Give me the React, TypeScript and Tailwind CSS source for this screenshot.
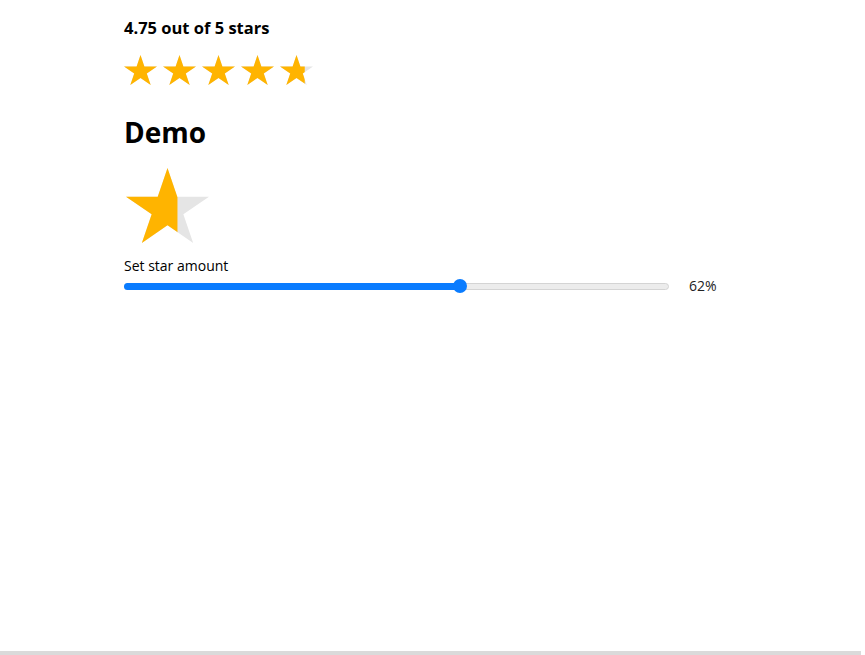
import React, { useState } from 'react';

// regular five-point star, stretched a little wider to match the design
const STAR_POINTS = (() => {
  const pts: string[] = [];
  for (let i = 0; i < 10; i++) {
    const r = i % 2 === 0 ? 1 : 0.382;
    const a = (Math.PI / 5) * i - Math.PI / 2;
    pts.push(`${(r * Math.cos(a)).toFixed(4)},${(r * Math.sin(a)).toFixed(4)}`);
  }
  return pts.join(' ');
})();

interface StarProps {
  fill: number;
  width: number;
  height: number;
  id: string;
}

const Star: React.FC<StarProps> = ({ fill, width, height, id }) => (
  <svg
    width={width}
    height={height}
    viewBox="-0.951 -1 1.902 1.809"
    preserveAspectRatio="none"
    className="block"
  >
    <defs>
      <clipPath id={id}>
        <rect x="-0.951" y="-1" width={1.902 * fill} height="2" />
      </clipPath>
    </defs>
    <polygon points={STAR_POINTS} fill="#e5e5e5" />
    <polygon points={STAR_POINTS} fill="#ffb400" clipPath={`url(#${id})`} />
  </svg>
);

export default function App() {
  const [amount, setAmount] = useState(62);
  const rating = 4.75;

  return (
    <div className="flex h-[655px] flex-col bg-white font-['Open_Sans',sans-serif] text-black">
      <div className="flex-1 pl-[124px] pt-4">
        <p className="text-[16.5px] leading-6 font-bold">{rating} out of 5 stars</p>
        <div className="mt-[15px] flex gap-[6px]">
          {[0, 1, 2, 3, 4].map((i) => (
            <Star
              key={i}
              id={`s${i}`}
              width={33}
              height={30}
              fill={Math.max(0, Math.min(1, rating - i))}
            />
          ))}
        </div>
        <h1 className="mt-[29px] text-[28px] leading-9 font-bold">Demo</h1>
        <div className="mt-[18px] ml-[2px]">
          <Star id="big" width={83} height={75} fill={amount / 100} />
        </div>
        <p className="mt-[14px] text-[14px] leading-[18px]">Set star amount</p>
        <div className="flex w-[600px] items-center">
          <div className="relative h-5 w-[545px]">
            <div className="absolute top-[7px] right-0 left-0 h-[7px] rounded-full border border-[#d4d4d4] bg-[#ececec]" />
            <div
              className="absolute top-[7px] left-0 h-[7px] rounded-full bg-[#0a7cff]"
              style={{ width: `${amount * 5.37 + 4}px` }}
            />
            <div
              className="absolute top-[3px] h-[14px] w-[14px] rounded-full bg-[#0a7cff]"
              style={{ left: `${amount * 5.37 - 4}px` }}
            />
            <input
              type="range"
              min={0}
              max={100}
              value={amount}
              onChange={(e) => setAmount(Number(e.target.value))}
              className="absolute inset-0 h-full w-full cursor-pointer opacity-0"
            />
          </div>
          <span className="ml-[20px] text-[14px] text-[#222]">{amount}%</span>
        </div>
      </div>
      <div className="h-[4px] w-[861px] bg-[#dadada]" />
    </div>
  );
}
